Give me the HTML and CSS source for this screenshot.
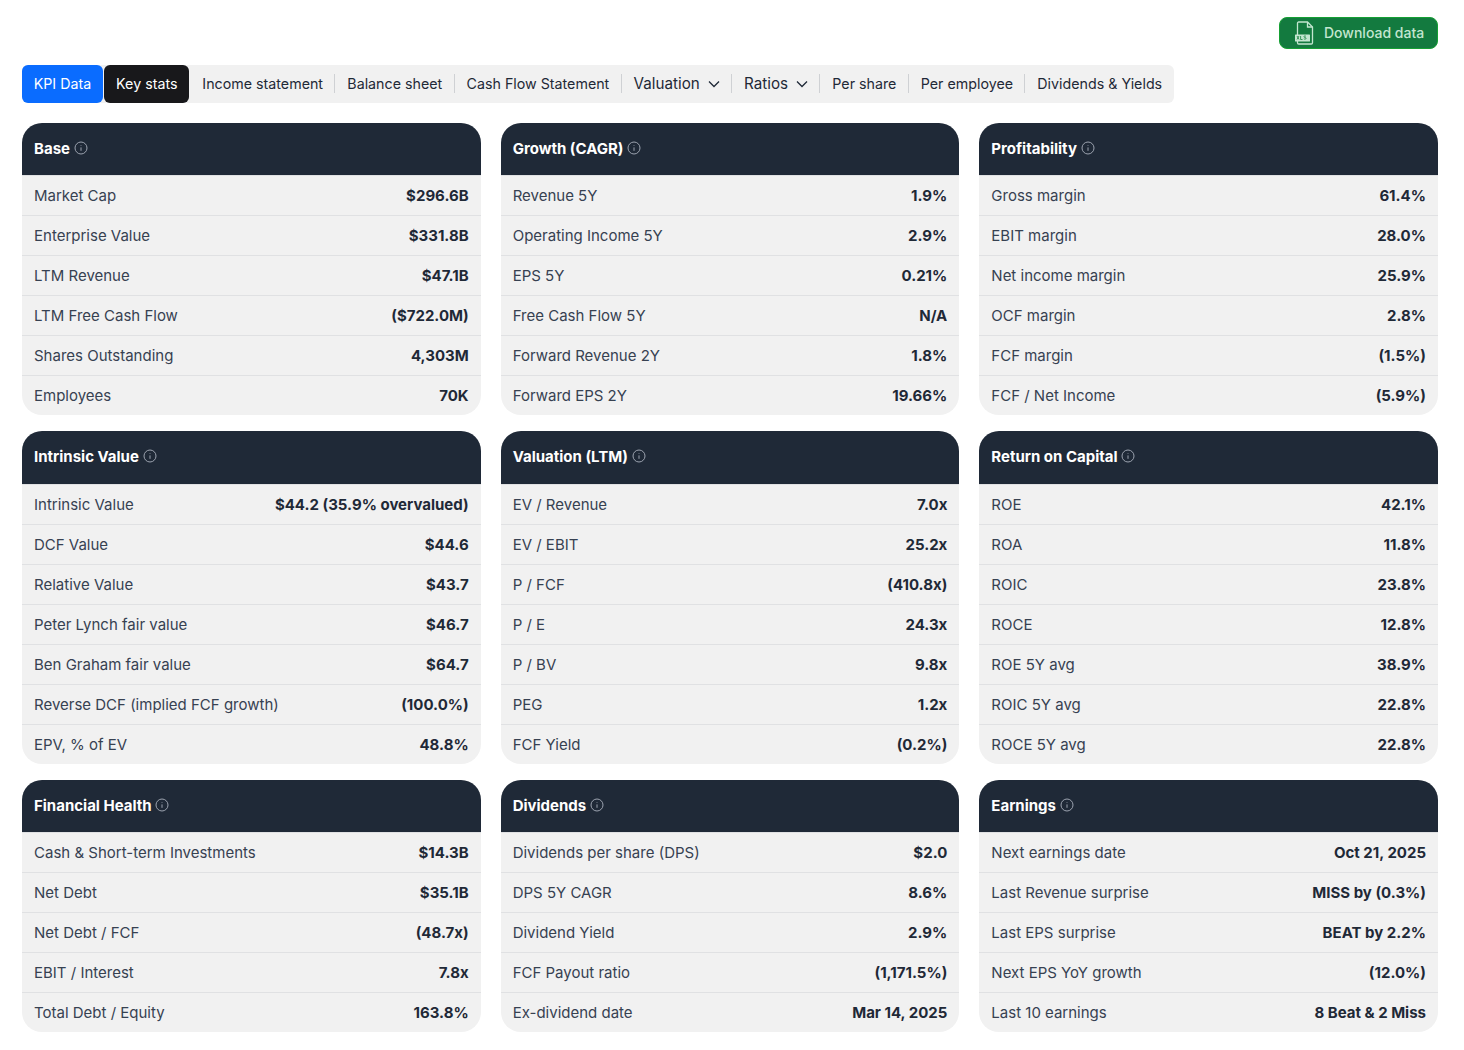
FILE: index.html
```html
<!DOCTYPE html>
<html lang="en">
<head>
<meta charset="utf-8">
<title>KPI Data</title>
<link rel="stylesheet" href="styles.css">
</head>
<body>
<svg class="defs" width="0" height="0"><defs>
<symbol id="info" viewBox="0 0 14 14"><circle cx="7" cy="7" r="6" fill="none" stroke="currentColor" stroke-width="1"/><path d="M7 6.4v3.4M7 4.2v.6" fill="none" stroke="currentColor" stroke-width="1"/></symbol>
</defs></svg>
<div class="top">
  <a class="download">
    <svg class="xls" viewBox="0 0 20 24" width="20" height="24"><path d="M3.5 14V2.2c0-.7.5-1.2 1.2-1.2h8.8l5 5v15.8c0 .7-.5 1.2-1.2 1.2H4.700000000000001c-.7 0-1.2-.5-1.2-1.2V20" fill="none" stroke="currentColor" stroke-width="1.3"/><path d="M13.5 1v5h5" fill="none" stroke="currentColor" stroke-width="1.3"/><rect x="1" y="13.5" width="15" height="7" rx=".6" fill="currentColor"/><path d="M3 15l2 3.500M5 15l-2 3.500M6.600 15v3.500h1.900M12 15.300c-.8-.6-2.200-.4-2.100.5.1.900 2.200.5 2.200 1.500 0 1-1.500 1.100-2.300.5" fill="none" stroke="#15803d" stroke-width=".8"/></svg>
    <span class="dl-label">Download data</span>
  </a>
</div>
<nav class="tabs">
  <a class="tab kpi">KPI Data</a>
  <a class="tab active">Key stats</a>
  <a class="tab sep">Income statement</a>
  <a class="tab sep">Balance sheet</a>
  <a class="tab sep">Cash Flow Statement</a>
  <a class="tab sep drop">Valuation <svg class="chev" viewBox="0 0 12 8" width="12" height="8"><path d="M1 1.500l5 5 5-5" fill="none" stroke="currentColor" stroke-width="1.300"/></svg></a>
  <a class="tab sep drop">Ratios <svg class="chev" viewBox="0 0 12 8" width="12" height="8"><path d="M1 1.500l5 5 5-5" fill="none" stroke="currentColor" stroke-width="1.300"/></svg></a>
  <a class="tab sep">Per share</a>
  <a class="tab sep">Per employee</a>
  <a class="tab">Dividends &amp; Yields</a>
</nav>
<main class="grid">
  <section class="card">
    <h3 class="head">Base <svg class="info"><use href="#info"/></svg></h3>
    <div class="row"><span>Market Cap</span><b>$296.6B</b></div>
    <div class="row"><span>Enterprise Value</span><b>$331.8B</b></div>
    <div class="row"><span>LTM Revenue</span><b>$47.1B</b></div>
    <div class="row"><span>LTM Free Cash Flow</span><b>($722.0M)</b></div>
    <div class="row"><span>Shares Outstanding</span><b>4,303M</b></div>
    <div class="row"><span>Employees</span><b>70K</b></div>
  </section>
  <section class="card">
    <h3 class="head">Growth (CAGR) <svg class="info"><use href="#info"/></svg></h3>
    <div class="row"><span>Revenue 5Y</span><b>1.9%</b></div>
    <div class="row"><span>Operating Income 5Y</span><b>2.9%</b></div>
    <div class="row"><span>EPS 5Y</span><b>0.21%</b></div>
    <div class="row"><span>Free Cash Flow 5Y</span><b>N/A</b></div>
    <div class="row"><span>Forward Revenue 2Y</span><b>1.8%</b></div>
    <div class="row"><span>Forward EPS 2Y</span><b>19.66%</b></div>
  </section>
  <section class="card">
    <h3 class="head">Profitability <svg class="info"><use href="#info"/></svg></h3>
    <div class="row"><span>Gross margin</span><b>61.4%</b></div>
    <div class="row"><span>EBIT margin</span><b>28.0%</b></div>
    <div class="row"><span>Net income margin</span><b>25.9%</b></div>
    <div class="row"><span>OCF margin</span><b>2.8%</b></div>
    <div class="row"><span>FCF margin</span><b>(1.5%)</b></div>
    <div class="row"><span>FCF / Net Income</span><b>(5.9%)</b></div>
  </section>
  <section class="card">
    <h3 class="head">Intrinsic Value <svg class="info"><use href="#info"/></svg></h3>
    <div class="row"><span>Intrinsic Value</span><b>$44.2 (35.9% overvalued)</b></div>
    <div class="row"><span>DCF Value</span><b>$44.6</b></div>
    <div class="row"><span>Relative Value</span><b>$43.7</b></div>
    <div class="row"><span>Peter Lynch fair value</span><b>$46.7</b></div>
    <div class="row"><span>Ben Graham fair value</span><b>$64.7</b></div>
    <div class="row"><span>Reverse DCF (implied FCF growth)</span><b>(100.0%)</b></div>
    <div class="row"><span>EPV, % of EV</span><b>48.8%</b></div>
  </section>
  <section class="card">
    <h3 class="head">Valuation (LTM) <svg class="info"><use href="#info"/></svg></h3>
    <div class="row"><span>EV / Revenue</span><b>7.0x</b></div>
    <div class="row"><span>EV / EBIT</span><b>25.2x</b></div>
    <div class="row"><span>P / FCF</span><b>(410.8x)</b></div>
    <div class="row"><span>P / E</span><b>24.3x</b></div>
    <div class="row"><span>P / BV</span><b>9.8x</b></div>
    <div class="row"><span>PEG</span><b>1.2x</b></div>
    <div class="row"><span>FCF Yield</span><b>(0.2%)</b></div>
  </section>
  <section class="card">
    <h3 class="head">Return on Capital <svg class="info"><use href="#info"/></svg></h3>
    <div class="row"><span>ROE</span><b>42.1%</b></div>
    <div class="row"><span>ROA</span><b>11.8%</b></div>
    <div class="row"><span>ROIC</span><b>23.8%</b></div>
    <div class="row"><span>ROCE</span><b>12.8%</b></div>
    <div class="row"><span>ROE 5Y avg</span><b>38.9%</b></div>
    <div class="row"><span>ROIC 5Y avg</span><b>22.8%</b></div>
    <div class="row"><span>ROCE 5Y avg</span><b>22.8%</b></div>
  </section>
  <section class="card">
    <h3 class="head">Financial Health <svg class="info"><use href="#info"/></svg></h3>
    <div class="row"><span>Cash &amp; Short-term Investments</span><b>$14.3B</b></div>
    <div class="row"><span>Net Debt</span><b>$35.1B</b></div>
    <div class="row"><span>Net Debt / FCF</span><b>(48.7x)</b></div>
    <div class="row"><span>EBIT / Interest</span><b>7.8x</b></div>
    <div class="row"><span>Total Debt / Equity</span><b>163.8%</b></div>
  </section>
  <section class="card">
    <h3 class="head">Dividends <svg class="info"><use href="#info"/></svg></h3>
    <div class="row"><span>Dividends per share (DPS)</span><b>$2.0</b></div>
    <div class="row"><span>DPS 5Y CAGR</span><b>8.6%</b></div>
    <div class="row"><span>Dividend Yield</span><b>2.9%</b></div>
    <div class="row"><span>FCF Payout ratio</span><b>(1,171.5%)</b></div>
    <div class="row"><span>Ex-dividend date</span><b>Mar 14, 2025</b></div>
  </section>
  <section class="card">
    <h3 class="head">Earnings <svg class="info"><use href="#info"/></svg></h3>
    <div class="row"><span>Next earnings date</span><b>Oct 21, 2025</b></div>
    <div class="row"><span>Last Revenue surprise</span><b>MISS by (0.3%)</b></div>
    <div class="row"><span>Last EPS surprise</span><b>BEAT by 2.2%</b></div>
    <div class="row"><span>Next EPS YoY growth</span><b>(12.0%)</b></div>
    <div class="row"><span>Last 10 earnings</span><b>8 Beat &amp; 2 Miss</b></div>
  </section>
</main>
</body>
</html>
```
FILE: styles.css
```css
* { box-sizing: border-box; }
html, body { margin: 0; background: #fff; }
body {
  padding: 17px 26px 0 22px;
  font-family: Inter, "Liberation Sans", sans-serif;
  font-size: 15px;
  color: #1f2937;
}
.defs { position: absolute; }
.top { display: flex; justify-content: flex-end; height: 48px; }
.download {
  display: flex; align-items: center; gap: 10px;
  width: 159px; height: 32px; padding-left: 14px;
  background: #137a3f; border: 1px solid #16a034; border-radius: 8px;
  color: #c3e6d0; font-size: 14px; font-weight: 500;
}
.dl-label { margin-top: -2px; }
.xls { flex: none; }
.tabs {
  display: flex; align-items: center; height: 38px; width: 1152px;
  background: #f1f1f1; border-radius: 6px; font-size: 14.25px;
}
.tab { display: flex; align-items: center; height: 38px; padding: 0 12px 1px; position: relative; white-space: nowrap; border-radius: 6px; }
.tab.sep { padding-right: 12.3px; }
.tab.sep::after {
  content: ""; position: absolute; right: 0; top: 9px; height: 19px; width: 1px; background: #cfd1d4;
}
.kpi { background: #0a6cff; color: #fff; padding: 0 11.7px 1px; }
.active { background: #18181b; color: #fff; margin: 0 1px 0 1.3px; padding: 0 11.9px 1px; }
.drop { font-size: 15.2px; gap: 8px; }
.chev { margin-top: 1px; }
.grid {
  display: grid; grid-template-columns: repeat(3, 1fr); column-gap: 20px; row-gap: 16px;
  margin-top: 20px;
}
.card { background: #f1f1f1; border-radius: 20px; overflow: hidden; }
.head {
  display: flex; align-items: center; gap: 3.8px; height: 52.4px; margin: 0; padding: 0 12px 1.6px;
  background: #1f2937; color: #fff; font-size: 15px; font-weight: 700;
}
.info { width: 14px; height: 14px; color: #9ca3af; margin-top: -1px; }
.row {
  display: flex; justify-content: space-between; align-items: center; height: 40px; padding: 0 12px;
  border-top: 1px solid #e0e1e3;
}
.row span { color: #374151; }
.row b { font-weight: 700; color: #1f2937; }
```
